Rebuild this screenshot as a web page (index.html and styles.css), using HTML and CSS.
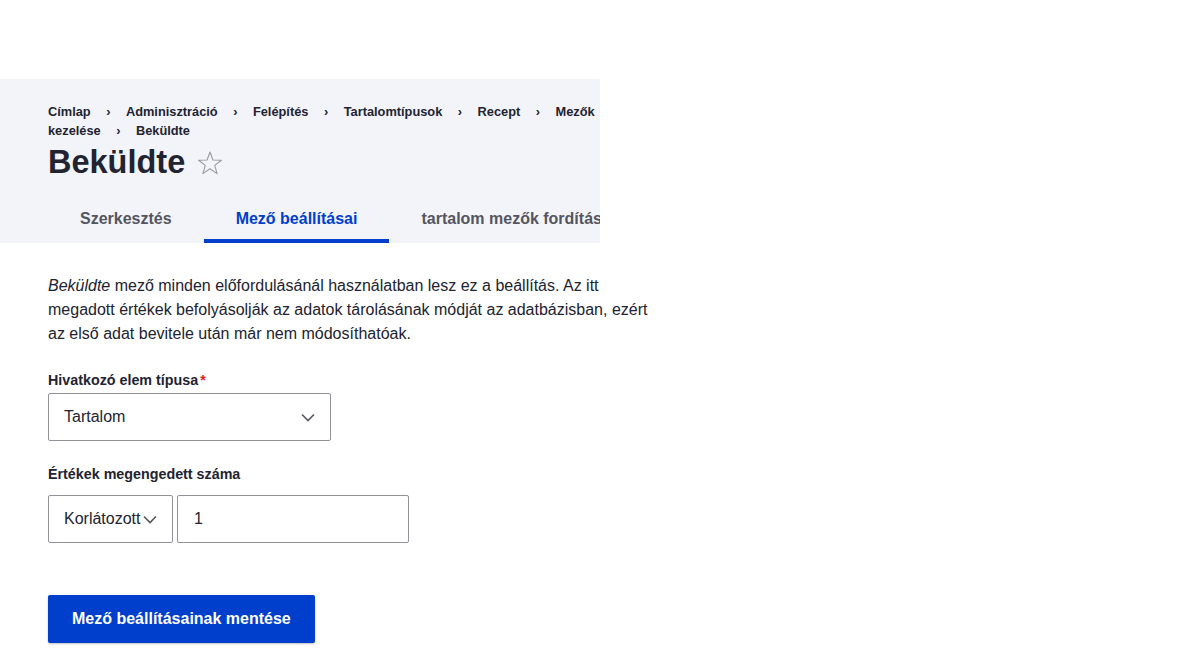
FILE: index.html
```html
<!DOCTYPE html>
<html lang="hu">
<head>
<meta charset="utf-8">
<title>Beküldte</title>
<link rel="stylesheet" href="styles.css">
</head>
<body>
<div class="page">
  <div class="header">
    <ol class="breadcrumb"><li class="crumb">Címlap</li><li class="crumb">Adminisztráció</li><li class="crumb">Felépítés</li><li class="crumb">Tartalomtípusok</li><li class="crumb">Recept</li><li class="crumb">Mezők kezelése</li><li class="crumb">Beküldte</li></ol>
    <div class="title-row">
      <h1 class="title">Beküldte</h1>
      <svg class="star" width="26" height="26" viewBox="0 0 26 26" aria-hidden="true">
        <polygon points="13,2 15.9,10 24.4,10.2 17.7,15.4 20.1,23.6 13,18.8 5.9,23.6 8.3,15.4 1.6,10.2 10.1,10" fill="none" stroke="#9a9aa0" stroke-width="1.1" stroke-linejoin="round"/>
      </svg>
    </div>
    <nav class="tabs">
      <a class="tab">Szerkesztés</a>
      <a class="tab tab--active">Mező beállításai</a>
      <a class="tab">tartalom mezők fordítása</a>
    </nav>
  </div>
  <div class="content">
    <p class="desc"><em>Beküldte</em> mező minden előfordulásánál használatban lesz ez a beállítás. Az itt megadott értékek befolyásolják az adatok tárolásának módját az adatbázisban, ezért az első adat bevitele után már nem módosíthatóak.</p>
    <div class="field field--first">
      <div class="label">Hivatkozó elem típusa<span class="req">*</span></div>
      <div class="select select--wide">
        <span>Tartalom</span>
        <svg class="chev" width="14" height="9" viewBox="0 0 14 9" aria-hidden="true"><path d="M1 1.5 L7 7.5 L13 1.5" fill="none" stroke="#545560" stroke-width="1.6"/></svg>
      </div>
    </div>
    <div class="field field--second">
      <div class="label label--legend">Értékek megengedett száma</div>
      <div class="row">
        <div class="select select--narrow">
          <span>Korlátozott</span>
          <svg class="chev" width="14" height="9" viewBox="0 0 14 9" aria-hidden="true"><path d="M1 1.5 L7 7.5 L13 1.5" fill="none" stroke="#545560" stroke-width="1.6"/></svg>
        </div>
        <div class="input">1</div>
      </div>
    </div>
    <button class="button">Mező beállításainak mentése</button>
  </div>
</div>
</body>
</html>
```
FILE: styles.css
```css
html {
  overflow-y: scroll;
}
html, body {
  margin: 0;
  padding: 0;
}
body {
  font-family: "Liberation Sans", Arial, sans-serif;
  color: #222330;
  background: #ffffff;
}
.page {
  padding-top: 79px;
  padding-bottom: 113px;
}
.header {
  width: 600px;
  box-sizing: border-box;
  background: #f3f4f9;
  padding: 23px 0 0 48px;
  overflow: hidden;
}
.breadcrumb {
  margin: 0;
  padding: 0;
  list-style: none;
  font-size: 12.8px;
  font-weight: bold;
  line-height: 19px;
  color: #222330;
}
.crumb {
  display: inline;
}
.crumb + .crumb::before {
  content: "›";
  padding: 0 15.5px;
}
.title-row {
  display: flex;
  align-items: center;
  margin: 2px 0 13px;
  height: 40px;
}
.title {
  margin: 0;
  font-size: 32.5px;
  line-height: 40px;
  font-weight: bold;
  color: #222330;
}
.star {
  margin-left: 12px;
  margin-top: 2px;
  display: block;
}
.tabs {
  display: flex;
  white-space: nowrap;
}
.tab {
  display: block;
  padding: 0 32px;
  height: 48px;
  line-height: 48px;
  font-size: 16px;
  font-weight: bold;
  color: #545560;
  box-sizing: border-box;
}
.tab--active {
  color: #003ecc;
  box-shadow: inset 0 -4px 0 #003ecc;
}
.content {
  padding: 0 48px;
}
.desc {
  width: 604px;
  margin: 31px 0 0;
  font-size: 16px;
  line-height: 24px;
}
.label {
  font-size: 14.3px;
  font-weight: bold;
  line-height: 18px;
  margin-bottom: 4px;
}
.label--legend {
  margin-bottom: 12px;
}
.req {
  color: #d72222;
  margin-left: 2px;
}
.field--first {
  margin-top: 25px;
}
.field--second {
  margin-top: 24px;
}
.row {
  display: flex;
  gap: 4px;
}
.select, .input {
  box-sizing: border-box;
  height: 48px;
  border: 1px solid #919297;
  border-radius: 2px;
  background: #ffffff;
  font-size: 16px;
  color: #222330;
  display: flex;
  align-items: center;
}
.select {
  justify-content: space-between;
  padding: 0 15px 0 15px;
}
.select--wide {
  width: 283px;
}
.select--narrow {
  width: 125px;
}
.chev {
  display: block;
  flex: none;
}
.input {
  width: 232px;
  padding: 0 16px;
}
.button {
  display: block;
  margin-top: 52px;
  height: 48px;
  padding: 0 24px;
  border: 0;
  border-radius: 2px;
  background: #003ecc;
  color: #ffffff;
  font-family: "Liberation Sans", Arial, sans-serif;
  font-size: 16px;
  font-weight: bold;
  box-shadow: 0 1px 2px rgba(0, 0, 0, 0.25);
}
```
